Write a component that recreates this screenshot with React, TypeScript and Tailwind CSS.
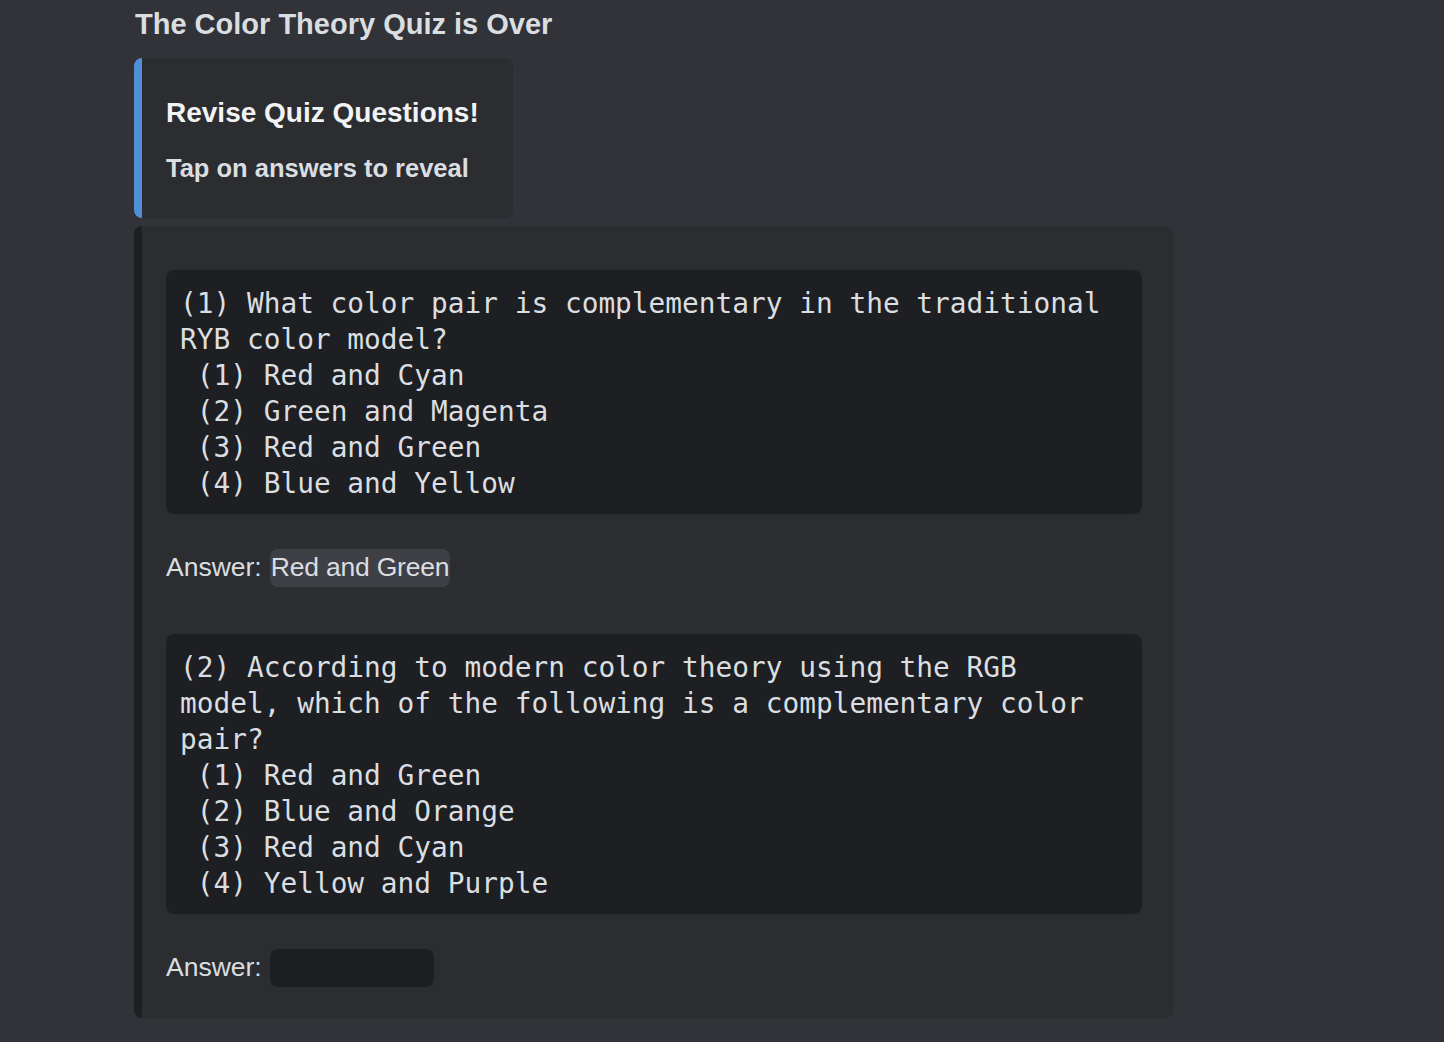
import React from "react";

const sans = { fontFamily: '"Liberation Sans", Arial, sans-serif' };

const questions = [
  {
    text: "(1) What color pair is complementary in the traditional RYB color model?\n (1) Red and Cyan\n (2) Green and Magenta\n (3) Red and Green\n (4) Blue and Yellow",
    answer: "Red and Green",
    revealed: true,
  },
  {
    text: "(2) According to modern color theory using the RGB model, which of the following is a complementary color pair?\n (1) Red and Green\n (2) Blue and Orange\n (3) Red and Cyan\n (4) Yellow and Purple",
    answer: "Blue and Orange",
    revealed: false,
  },
];

const Question = ({ q, first }: { q: (typeof questions)[number]; first: boolean }) => {
  return (
    <div className={first ? "" : "mt-[47px]"}>
      <pre className="w-[976px] rounded-lg bg-[#1e1f22] pl-[14px] pr-4 pt-[16px] pb-[12px] text-[27.8px] leading-[36px] text-[#dbdee1] whitespace-pre-wrap font-['DejaVu_Sans_Mono',monospace]">
        {q.text}
      </pre>
      <div className="mt-[35px] flex items-center h-[38px] text-[26.5px] text-[#dbdee1]">
        <span>Answer:</span>
        <span className="w-[8px]" />
        {q.revealed ? (
          <span className="h-[38px] flex items-center rounded-lg bg-[#3f4045] pl-[1px] pr-[1px] text-[#dbdee1] tracking-[-0.2px]">
            {q.answer}
          </span>
        ) : (
          <span className="h-[38px] w-[164px] rounded-lg bg-[#1e1f22]" />
        )}
      </div>
    </div>
  );
};

export default function App() {
  return (
    <div className="min-h-[1042px] w-full bg-[#313338] pl-[134px] pt-[6px]" style={sans}>
      <h1 className="text-[29px] leading-[36px] font-bold text-[#dbdee1] pl-[1px]">
        The Color Theory Quiz is Over
      </h1>
      <div className="mt-[16px] w-[379px] h-[160px] flex rounded-lg overflow-hidden bg-[#2b2d31]">
        <div className="w-2 bg-[#4e8fd6]" />
        <div className="pl-[24px] pt-[37px]">
          <div className="text-[28px] leading-[36px] font-bold text-[#f2f3f5]">Revise Quiz Questions!</div>
          <div className="mt-[20px] text-[25.5px] leading-[34px] font-bold text-[#dbdee1]">
            Tap on answers to reveal
          </div>
        </div>
      </div>
      <div className="mt-2 w-[1040px] flex rounded-lg overflow-hidden bg-[#2b2d31]">
        <div className="w-2 bg-[#1e1f22]" />
        <div className="pl-[24px] pt-[44px] pb-[31px]">
          {questions.map((q, i) => (
            <Question key={i} q={q} first={i === 0} />
          ))}
        </div>
      </div>
    </div>
  );
}
